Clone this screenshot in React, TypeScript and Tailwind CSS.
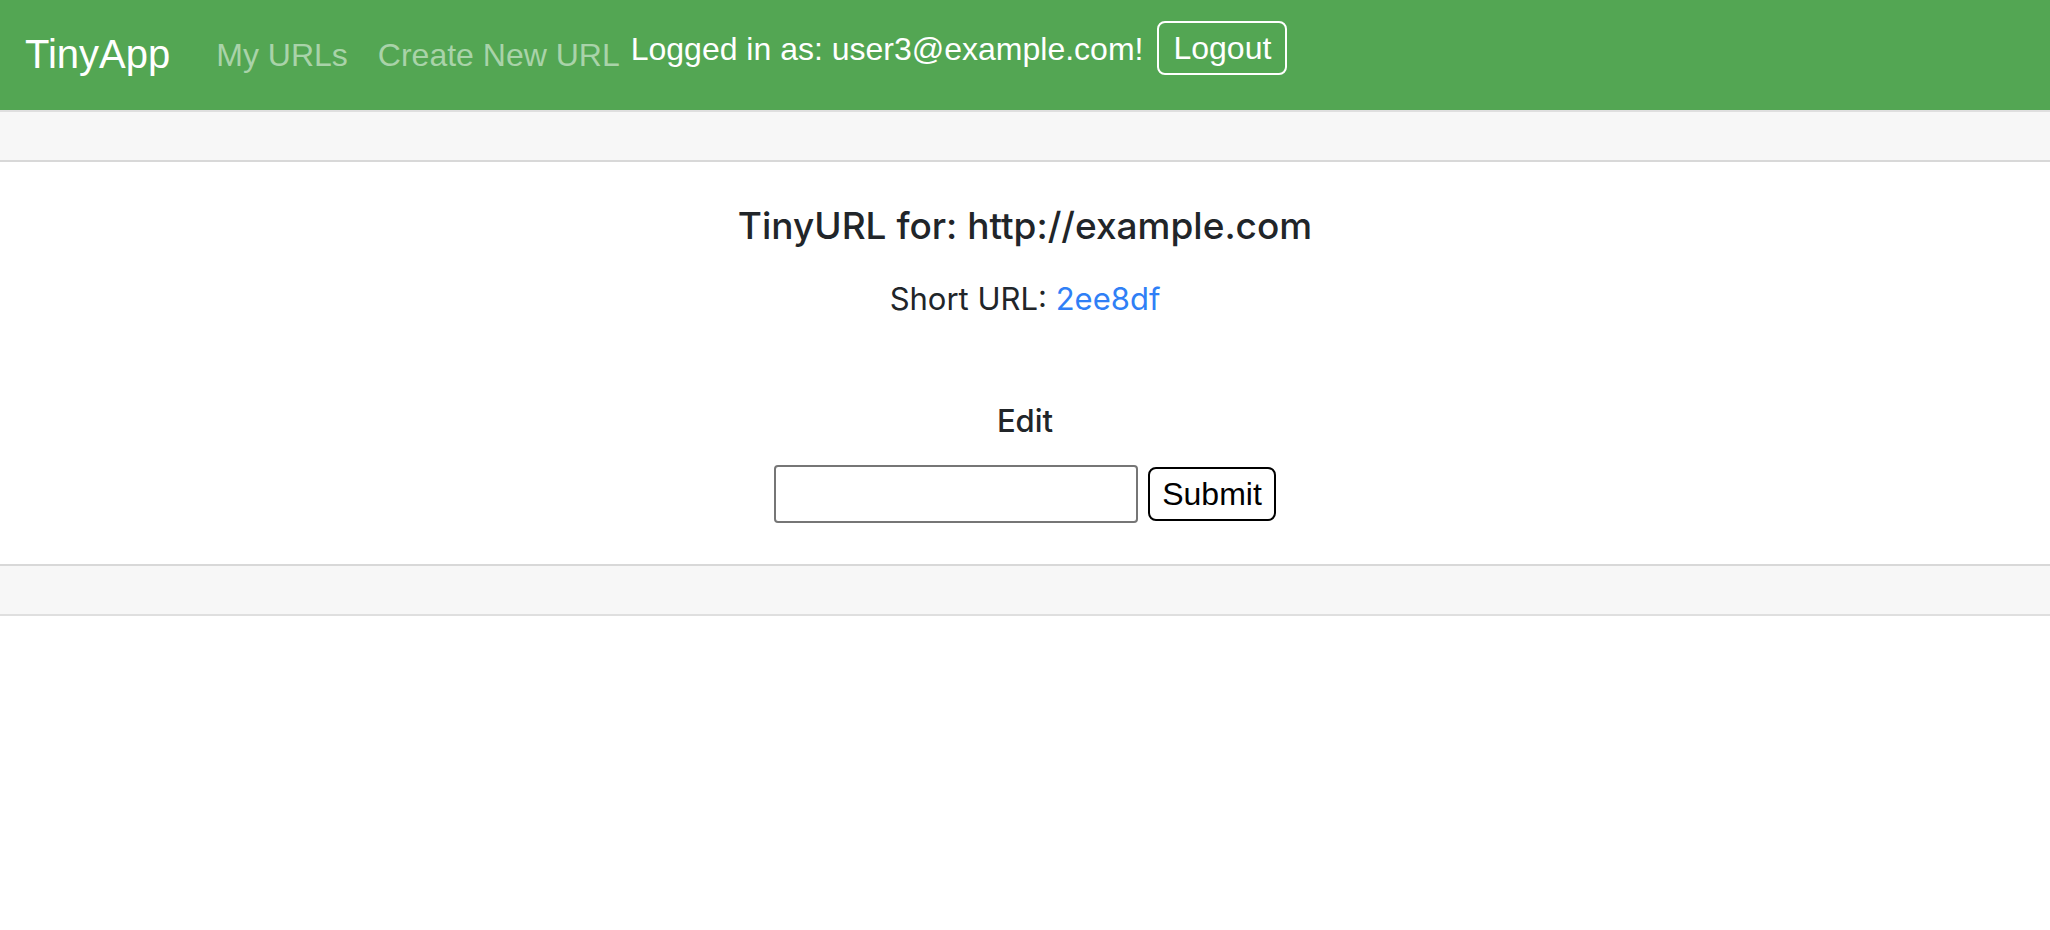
export default function App() {
  return (
    <div className="min-h-screen bg-white font-['Liberation_Sans',Arial,sans-serif]">
      <nav className="flex h-[110px] items-start bg-[#53a653] pl-[25px]">
        <a className="mt-[24px] mr-[30px] text-[40px] leading-[60px] text-white">TinyApp</a>
        <a className="mt-[31px] px-[16px] text-[32px] leading-[48px] text-[#a9d3a9]">My URLs</a>
        <a className="mt-[31px] pl-[14px] pr-[11px] text-[32px] leading-[48px] text-[#a9d3a9]">Create New URL</a>
        <form className="flex items-start">
          <span className="mt-[25px] text-[32px] leading-[48px] text-white">Logged in as: user3@example.com!</span>
          <button
            type="button"
            className="mt-[21px] ml-[14px] h-[54px] rounded-[8px] border-2 border-white px-[14px] text-[32px] leading-[48px] text-white"
          >
            Logout
          </button>
        </form>
      </nav>

      <div className="border-y-2 border-[#dfdfdf] font-['Inter',sans-serif] text-[#212529]">
        <div className="h-[50px] border-b-2 border-[#d8d8d8] bg-[#f7f7f7]"></div>
        <div className="px-[40px] pt-[40px] pb-[41px] text-center">
          <h5 className="mb-[25px] text-[37px] leading-[48px] font-medium">TinyURL for: http://example.com</h5>
          <p className="text-[31px] leading-[48px]">
            Short URL: <a className="text-[#2f7ff6]">2ee8df</a>
          </p>
          <h6 className="mt-[79px] mb-[25px] text-[31px] leading-[38px] font-medium">Edit</h6>
          <form className="flex items-center justify-center gap-[10px]">
            <input
              type="text"
              className="h-[58px] w-[364px] rounded-[4px] border-2 border-[#767676] bg-white px-2 text-[28px]"
            />
            <button
              type="button"
              className="h-[54px] rounded-[8px] border-2 border-black bg-white px-[12px] font-['Liberation_Sans',Arial,sans-serif] text-[32px] leading-[48px] text-black"
            >
              Submit
            </button>
          </form>
        </div>
        <div className="h-[50px] border-t-2 border-[#d8d8d8] bg-[#f7f7f7]"></div>
      </div>
    </div>
  );
}
